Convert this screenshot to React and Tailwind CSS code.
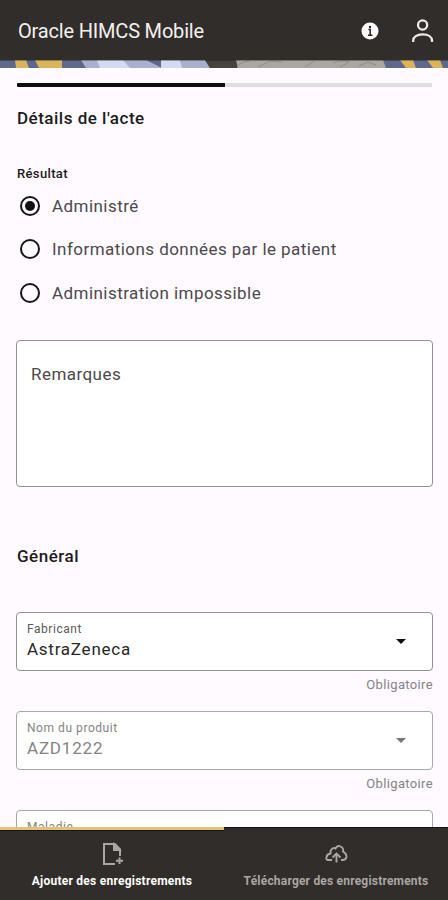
import React from "react";

function BannerStrip() {
  return (
    <svg className="block h-2 w-full shrink-0" viewBox="0 0 448 8" preserveAspectRatio="none">
      <rect width="448" height="8" fill="#5e688b" />
      <path d="M15 0h11l3 8H16zM35 0h27v8H39z" fill="#d9b45c" />
      <path d="M81 0h65l16 8H86z" fill="#aab1cf" />
      <path d="M97 0h26l7 8h-30zM161 0h19l3 8h-22z" fill="#d3dbf0" />
      <path d="M180 0h25l5 8h-28z" fill="#a9b0cc" />
      <path d="M205 0h32v8h-27z" fill="#47423e" />
      <path d="M236 0h147l3 8H238z" fill="#aaa6a0" />
      <path d="M238 5q5-4 12-4M258 7l12-6 12 1M305 7l9-6M333 3q9-4 16-1l-9 5M359 6l9-4 8 3" fill="none" stroke="#8f8a85" />
      <path d="M400 0h13l3 8h-10zM427 0h13l3 8h-10z" fill="#d9b45c" />
      <rect width="448" height="1" fill="#15131b" opacity=".35" />
    </svg>
  );
}

function Header() {
  return (
    <header className="flex h-[60px] shrink-0 items-center bg-[#312d2a] pl-[18px] pr-[14px] pt-[2px] text-[#f3f1ef]">
      <h1 className="flex-1 whitespace-nowrap text-[20px] leading-6 tracking-[-0.18px]">Oracle HIMCS Mobile</h1>
      <svg className="mr-[31px] size-[18px]" viewBox="0 0 18 18">
        <circle cx="9" cy="9" r="8.5" fill="#fff" />
        <circle cx="9" cy="5" r="1.2" fill="#24201e" />
        <path d="M7.400 7.500H9.200v5.500M7 13.200h4.400" fill="none" stroke="#24201e" strokeWidth="1.5" />
      </svg>
      <svg className="size-6" viewBox="0 0 24 24" fill="none" stroke="#eeeae7" strokeWidth="2.3">
        <circle cx="12.600" cy="6" r="4.600" />
        <path d="M3.200 23v-1.400c0-3.600 3.600-6.200 9.400-6.200s9.400 2.600 9.400 6.200V23" />
      </svg>
    </header>
  );
}

function Radio({ label, checked }) {
  return (
    <label className="flex h-[43.500px] items-center">
      <span className="mr-3 flex size-5 items-center justify-center rounded-full border-2 border-[#171617]">
        {checked && <span className="size-[10px] rounded-full bg-[#111]" />}
      </span>
      <span className="whitespace-nowrap text-[17px] leading-5 tracking-[0.45px] text-[#4b494b]">{label}</span>
    </label>
  );
}

function SelectField({ label, value, disabled, spacing }) {
  return (
    <div className={`flex h-[59px] items-center rounded-[4px] border bg-white pl-[10px] pr-[26px] ${disabled ? "border-[#a9a8a9]" : "border-[#929092]"}`}>
      <div className="flex-1 pb-[3px]">
        <div className={`text-[12px] leading-[18px] tracking-[0.55px] ${disabled ? "text-[#858385]" : "text-[#5c5a5c]"}`}>{label}</div>
        <div className={`text-[17px] leading-[22px] ${spacing} ${disabled ? "text-[#858385]" : "text-[#292729]"}`}>{value}</div>
      </div>
      <svg className="h-[5px] w-[10px]" viewBox="0 0 10 5"><path d="M0 0h10L5 5z" fill={disabled ? "#777" : "#111"} /></svg>
    </div>
  );
}

function Required() {
  return <div className="h-10 pt-[5px] text-right text-[13px] leading-[18px] tracking-[0.35px] text-[#858385]">Obligatoire</div>;
}

function Nav() {
  return (
    <nav className="grid h-[73px] shrink-0 grid-cols-2 bg-[#312d2a] text-[12px] font-bold leading-[14px]">
      <div className="flex flex-col items-center border-t-[3px] border-[#e3c370] pt-[12px] text-white shadow-[inset_0_1px_0_#15121b]">
        <svg className="mb-[8px] h-6 w-6" viewBox="0 0 24 24" fill="none" stroke="#aaa6a3" strokeWidth="2">
          <path d="M15 22H4V2h11l5 5.500V14M14 2v6h6" />
          <path d="M14.500 2.500v5h5z" fill="#aaa6a3" />
          <path d="M19.500 15.500v6.500M16 18.700h7" />
        </svg>
        <span className="whitespace-nowrap tracking-[0.25px]">Ajouter des enregistrements</span>
      </div>
      <div className="flex flex-col items-center pt-[15px] text-[#aaa6a3] shadow-[inset_0_1px_0_#15121b]">
        <svg className="mb-[8px] h-6 w-6" viewBox="0 0 24 24" fill="none" stroke="#aaa6a3" strokeWidth="1.9">
          <path d="M8 18H3.500Q2 18 2.500 15q.5-3 4-3.500Q6 8 8.500 6.500q1.500-1 3 0Q13 3 16.500 4.500 20 6 19 9.500q3.500 2 3.500 5T19 18h-2" />
          <path d="M12.500 20.500V11m-4 4.500 4-4 4 4" />
        </svg>
        <span className="whitespace-nowrap tracking-[0.2px]">Télécharger des enregistrements</span>
      </div>
    </nav>
  );
}

export default function App() {
  return (
    <div className="flex h-[900px] w-[448px] flex-col overflow-hidden bg-[#fefaff] font-[Roboto,sans-serif]">
      <Header />
      <BannerStrip />
      <main className="min-h-0 flex-1 overflow-hidden pl-4 pr-[15px] pt-[15px]">
        <div className="mx-px h-[4px] overflow-hidden rounded-[1px] bg-[#dfdde0]"><div className="h-full w-1/2 bg-[#0d0c0e]" /></div>
        <h2 className="mt-[21px] pl-px text-[17px] font-medium leading-5 tracking-[0.5px] text-[#1c1b1d]">Détails de l'acte</h2>
        <div className="mt-[38px] pl-px text-[13px] font-medium leading-4 tracking-[0.35px] text-[#1c1b1d]">Résultat</div>
        <div className="mt-[2px] pl-1">
          <Radio label="Administré" checked />
          <Radio label="Informations données par le patient" />
          <Radio label="Administration impossible" />
        </div>
        <div className="mt-[25.500px] h-[147px] rounded-[4px] border border-[#929092] bg-white pl-[14px] pt-[23px] text-[17px] leading-5 tracking-[0.45px] text-[#4b494b]">Remarques</div>
        <h2 className="mb-[46px] mt-[59px] pl-px text-[17px] font-medium leading-5 tracking-[0.5px] text-[#1c1b1d]">Général</h2>
        <SelectField label="Fabricant" value="AstraZeneca" spacing="tracking-[0.75px]" />
        <Required />
        <SelectField label="Nom du produit" value="AZD1222" disabled spacing="tracking-[0.8px]" />
        <Required />
        <SelectField label="Maladie" value="COVID-19" disabled spacing="tracking-[0.8px]" />
      </main>
      <Nav />
    </div>
  );
}
